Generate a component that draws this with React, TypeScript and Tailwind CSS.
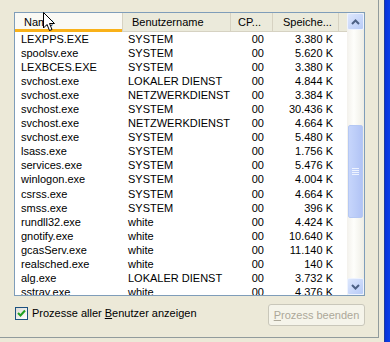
const rows: [string, string, string][] = [
  ["LEXPPS.EXE", "SYSTEM", "3.380 K"],
  ["spoolsv.exe", "SYSTEM", "5.620 K"],
  ["LEXBCES.EXE", "SYSTEM", "3.380 K"],
  ["svchost.exe", "LOKALER DIENST", "4.844 K"],
  ["svchost.exe", "NETZWERKDIENST", "3.384 K"],
  ["svchost.exe", "SYSTEM", "30.436 K"],
  ["svchost.exe", "NETZWERKDIENST", "4.664 K"],
  ["svchost.exe", "SYSTEM", "5.480 K"],
  ["lsass.exe", "SYSTEM", "1.756 K"],
  ["services.exe", "SYSTEM", "5.476 K"],
  ["winlogon.exe", "SYSTEM", "4.004 K"],
  ["csrss.exe", "SYSTEM", "4.664 K"],
  ["smss.exe", "SYSTEM", "396 K"],
  ["rundll32.exe", "white", "4.424 K"],
  ["gnotify.exe", "white", "10.640 K"],
  ["gcasServ.exe", "white", "11.140 K"],
  ["realsched.exe", "white", "140 K"],
  ["alg.exe", "LOKALER DIENST", "3.732 K"],
  ["sstray.exe", "white", "4.376 K"],
];

const Arrow = ({ up }: { up?: boolean }) => (
  <svg width="9" height="6" viewBox="0 0 9 6">
    <path
      d={up ? "M1 5 L4.5 1.5 L8 5" : "M1 1 L4.5 4.5 L8 1"}
      fill="none"
      stroke="#4d6185"
      strokeWidth={2}
    />
  </svg>
);

const ScrollButton = ({ up }: { up?: boolean }) => (
  <div className="w-[17px] h-[17px] flex items-center justify-center rounded-[2px] border border-[#eef3fe] bg-[linear-gradient(135deg,#dde7fd,#b8cbf7)]">
    <Arrow up={up} />
  </div>
);

export default function App() {
  return (
    <div
      className="relative w-[390px] h-[342px] bg-[#ece9d8] flex text-[11px] text-black"
      style={{ fontFamily: '"Liberation Sans", Arial, sans-serif' }}
    >
      <div className="w-[379px] h-[338px] border-r border-b border-[#919b9c] pl-[14px] pt-[12px]">
        {/* list view */}
        <div className="w-[351px] h-[284px] border border-[#7f9db9] bg-white flex">
          <div className="w-[332px] flex flex-col overflow-hidden">
            <div className="flex h-[19px] shrink-0 bg-[#ebeadb] border-b border-[#d6d2c2]">
              <div className="relative w-[107px] bg-[#faf9f4] pl-[9px] flex items-center">
                Name
                <div className="absolute left-0 right-0 bottom-[-1px] h-[3px] bg-[#f9b119]" />
              </div>
              <div className="w-[108px] pl-[9px] flex items-center border-l border-[#d6d2c2]">
                Benutzername
              </div>
              <div className="w-[42px] pl-[7px] flex items-center border-l border-[#d6d2c2]">
                CP...
              </div>
              <div className="w-[66px] pl-[10px] flex items-center border-l border-[#d6d2c2]">
                Speiche...
              </div>
              <div className="flex-1 border-l border-[#d6d2c2]" />
            </div>
            <div className="flex flex-col">
              {rows.map(([name, user, mem], i) => (
                <div key={i} className="flex h-[14.1px] items-center shrink-0 leading-none">
                  <div className="w-[107px] pl-[6px] whitespace-nowrap">{name}</div>
                  <div className="w-[108px] pl-[6px] whitespace-nowrap">{user}</div>
                  <div className="w-[42px] pr-[8px] text-right">00</div>
                  <div className="w-[66px] pr-[5px] text-right whitespace-nowrap">{mem}</div>
                </div>
              ))}
            </div>
          </div>
          {/* scrollbar */}
          <div className="w-[17px] flex flex-col bg-[linear-gradient(90deg,#f3f1ec,#fefefb_40%,#eeede5)]">
            <ScrollButton up />
            <div className="flex-1 flex flex-col">
              <div className="h-[95px]" />
              <div className="h-[93px] mx-[1px] rounded-[2px] border border-[#b5c8f3] bg-[linear-gradient(90deg,#c6d5fb,#bccdf8_50%,#b1c3f5)] flex items-center justify-center">
                <div className="flex flex-col gap-[1px]">
                  <div className="w-[7px] h-[1px] bg-[#eef3ff]" />
                  <div className="w-[7px] h-[1px] bg-[#eef3ff]" />
                  <div className="w-[7px] h-[1px] bg-[#eef3ff]" />
                  <div className="w-[7px] h-[1px] bg-[#eef3ff]" />
                </div>
              </div>
            </div>
            <ScrollButton />
          </div>
        </div>

        {/* bottom row */}
        <div className="w-[351px] mt-[8px] flex justify-between items-start">
          <div className="flex items-center gap-[4px] pl-[1px] pt-[1px]">
            <div className="w-[13px] h-[13px] border border-[#1c5180] bg-[linear-gradient(135deg,#dcdbd5,#fff)] flex items-center justify-center">
              <svg width="9" height="8" viewBox="0 0 9 8">
                <path d="M1 4 L3.5 6.5 L8 1.5" fill="none" stroke="#21a121" strokeWidth={2} />
              </svg>
            </div>
            <span>
              Prozesse aller <span className="underline">B</span>enutzer anzeigen
            </span>
          </div>
          <div className="w-[97px] h-[22px] rounded-[3px] border border-[#c9c7ba] bg-[#f5f4ea] text-[#aca899] flex items-center justify-center">
            <span>
              <span className="underline">P</span>rozess beenden
            </span>
          </div>
        </div>
      </div>
      <div className="w-[5px]" />
      <div className="w-[1px] bg-[#1c3e9c]" />
      <div className="flex-1 bg-[linear-gradient(90deg,#0831d9,#0a40e6)]" />

      {/* mouse cursor */}
      <svg className="absolute left-[43px] top-[12px]" width="13" height="20" viewBox="0 0 13 20">
        <path
          d="M0.5 0.5 L0.5 16 L4 12.5 L6.5 18.5 L9 17.5 L6.5 11.5 L11.5 11.5 Z"
          fill="#fff"
          stroke="#000"
          strokeWidth={1}
          strokeLinejoin="miter"
        />
      </svg>
    </div>
  );
}
